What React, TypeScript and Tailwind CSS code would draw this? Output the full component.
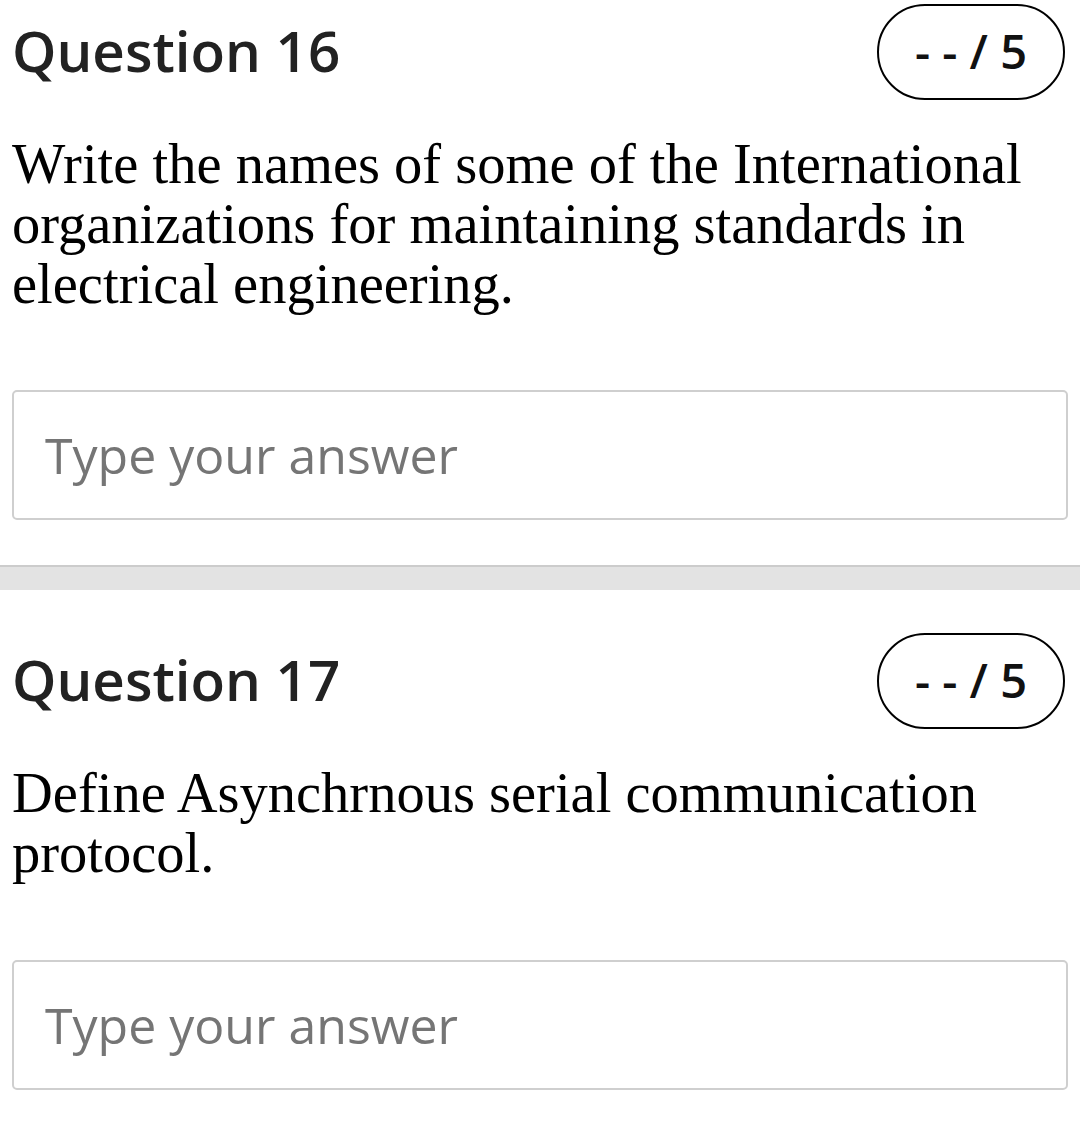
import React from "react";

function Badge() {
  return (
    <div className="flex h-[96px] w-[188px] items-center justify-center rounded-full border-[2.5px] border-black">
      <span className="text-[47px] font-semibold text-[#111] [font-family:'Open_Sans',sans-serif]">- - / 5</span>
    </div>
  );
}

function Question({ num, lines }: { num: number; lines: string }) {
  return (
    <section className="pl-[12px] pr-[15px]">
      <div className="flex h-[97px] items-center justify-between">
        <h2 className="text-[56.5px] font-semibold text-[#222] [font-family:'Open_Sans',sans-serif]">Question {num}</h2>
        <Badge />
      </div>
      <p className="mt-[34px] text-[56.5px] leading-[60px] text-black [font-family:'Liberation_Serif',serif]">{lines}</p>
    </section>
  );
}

function AnswerBox() {
  return (
    <div className="mx-[12px] flex h-[130px] items-center rounded-[5px] border-2 border-[#cfcfcf] pl-[31px]">
      <span className="text-[50px] text-[#757575] [font-family:'Open_Sans',sans-serif]">Type your answer</span>
    </div>
  );
}

export default function App() {
  return (
    <div className="h-[1132px] w-[1080px] overflow-hidden bg-white pt-[3px]">
      <Question num={16} lines="Write the names of some of the International organizations for maintaining standards in electrical engineering." />
      <div className="mt-[76px]">
        <AnswerBox />
      </div>
      <div className="mt-[45px] h-[25px] border-t-2 border-[#cccccc] bg-[#e3e3e3]" />
      <div className="mt-[42px]">
        <Question num={17} lines="Define Asynchrnous serial communication protocol." />
      </div>
      <div className="mt-[77px]">
        <AnswerBox />
      </div>
    </div>
  );
}
